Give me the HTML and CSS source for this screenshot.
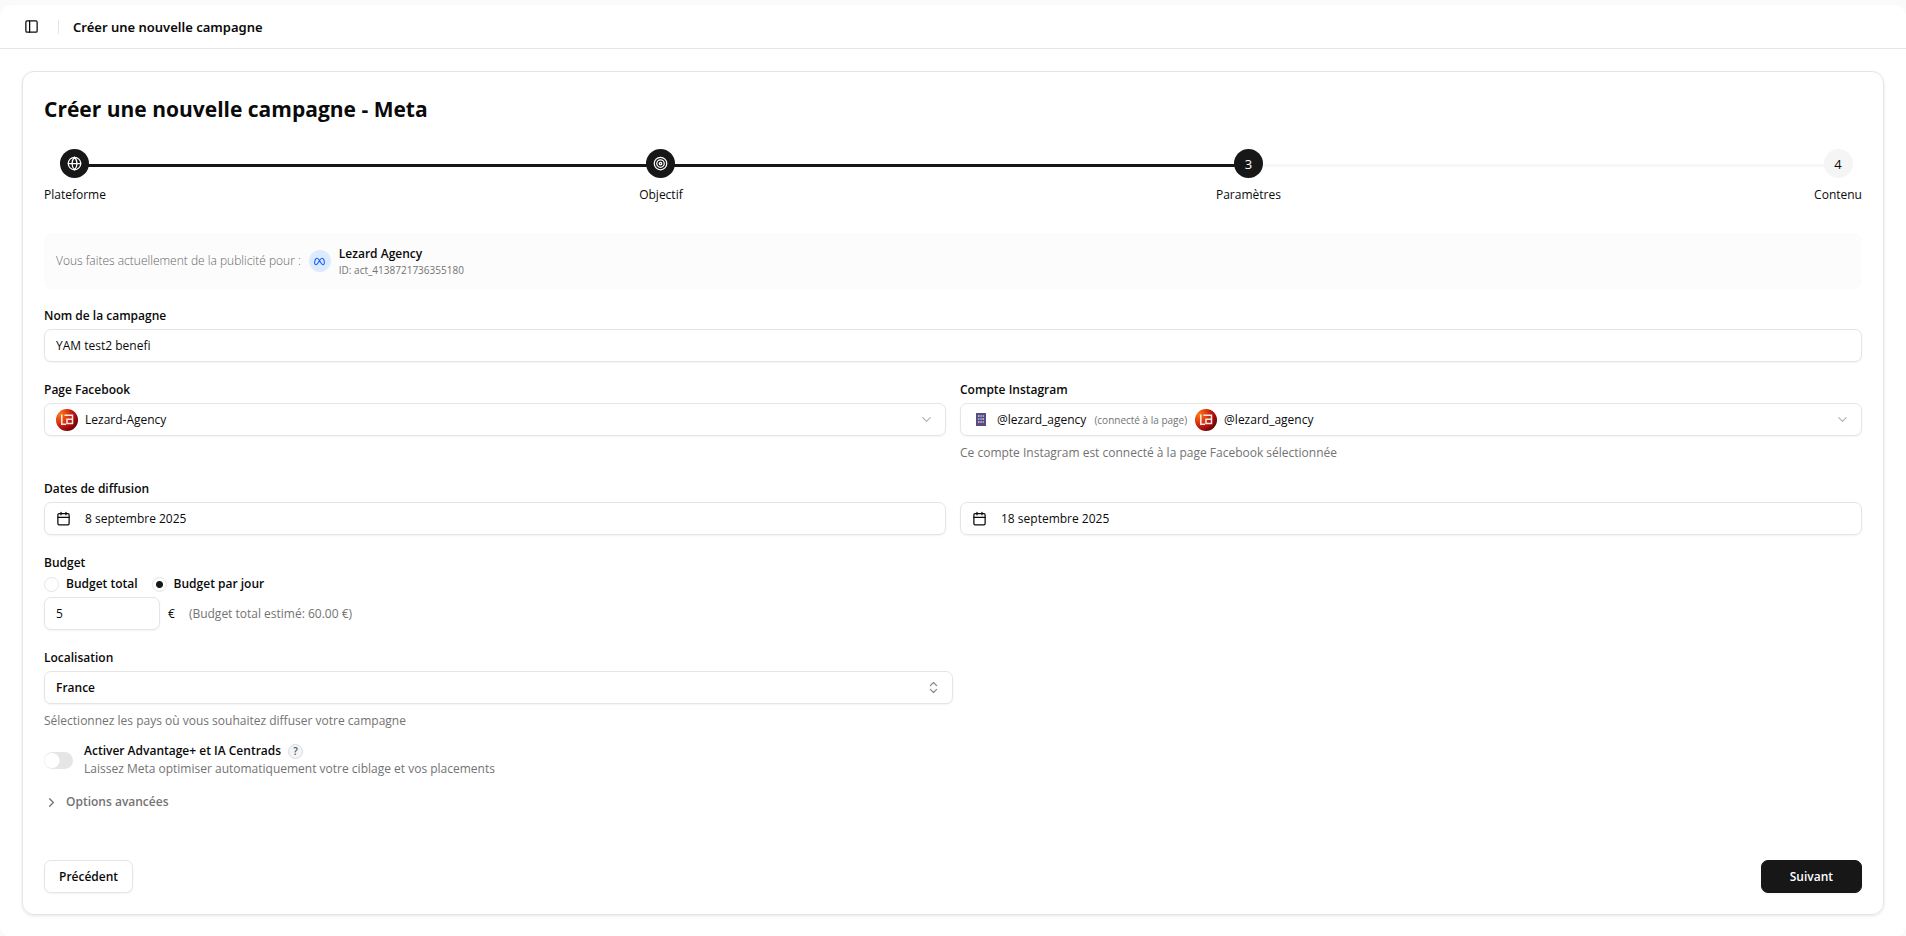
FILE: index.html
```html
<!DOCTYPE html>
<html lang="fr">
<head>
<meta charset="utf-8">
<title>Créer une nouvelle campagne</title>
<meta name="viewport" content="width=device-width, initial-scale=1">
<link rel="stylesheet" href="styles.css">
</head>
<body>
<svg class="defs" width="0" height="0" aria-hidden="true">
  <defs>
    <radialGradient id="brand-fill" cx="20%" cy="25%" r="90%">
      <stop offset="0" stop-color="#f97a12"/>
      <stop offset="0.4" stop-color="#dd3a10"/>
      <stop offset="0.7" stop-color="#b00d0d"/>
      <stop offset="1" stop-color="#5c0505"/>
    </radialGradient>
    <symbol id="brand" viewBox="0 0 22 22">
      <circle cx="11" cy="11" r="11" fill="url(#brand-fill)"/>
      <path d="M5.800 5.500v9.700h4.200M8.500 6.300h8v8.200h-5.500v-4.300h5.500" fill="none" stroke="#fff" stroke-opacity="0.9" stroke-width="1.500"/>
    </symbol>
    <symbol id="calendar" viewBox="0 0 24 24">
      <path d="M8 2v4M16 2v4M3 10h18"/><rect x="3" y="4" width="18" height="18" rx="2"/>
    </symbol>
    <symbol id="chevron-down" viewBox="0 0 24 24"><path d="m6 9 6 6 6-6"/></symbol>
  </defs>
</svg>
<div class="shell">
  <header class="topbar">
    <button class="icon-button" type="button" aria-label="Menu latéral">
      <svg class="icon" viewBox="0 0 24 24"><rect x="3" y="3" width="18" height="18" rx="2"/><path d="M9 3v18"/></svg>
    </button>
    <span class="divider"></span>
    <span class="crumb">Créer une nouvelle campagne</span>
  </header>

  <main class="content">
    <form class="card">
      <h1 class="title">Créer une nouvelle campagne - Meta</h1>

      <div class="stepper">
        <div class="track"><div class="progress" style="width: 66.5%"></div></div>
        <ol class="steps">
          <li class="step">
            <span class="dot done"><svg class="icon" viewBox="0 0 24 24"><circle cx="12" cy="12" r="10"/><path d="M12 2a14.5 14.5 0 0 0 0 20 14.5 14.5 0 0 0 0-20M2 12h20"/></svg></span>
            <span>Plateforme</span>
          </li>
          <li class="step">
            <span class="dot done"><svg class="icon" viewBox="0 0 24 24"><circle cx="12" cy="12" r="10"/><circle cx="12" cy="12" r="6"/><circle cx="12" cy="12" r="2"/></svg></span>
            <span>Objectif</span>
          </li>
          <li class="step" aria-current="step"><span class="dot done">3</span><span>Paramètres</span></li>
          <li class="step"><span class="dot">4</span><span>Contenu</span></li>
        </ol>
      </div>

      <div class="account">
        <span class="account-intro">Vous faites actuellement de la publicité pour :</span>
        <span class="meta-badge">
          <svg viewBox="0 0 24 24"><path d="M12 10.174c1.766-2.784 3.315-4.174 4.648-4.174 2 0 3.263 2.213 4 5.217.704 2.869.5 6.783-2 6.783-1.114 0-2.648-1.565-4.148-3.652a27.600 27.600 0 0 1-2.500-4.174M12 10.174c-1.766-2.784-3.315-4.174-4.648-4.174-2 0-3.263 2.213-4 5.217-.704 2.869-.5 6.783 2 6.783 1.114 0 2.648-1.565 4.148-3.652 1-1.391 1.833-2.783 2.500-4.174"/></svg>
        </span>
        <div class="account-text">
          <span class="account-name">Lezard Agency</span>
          <span class="account-id">ID: act_4138721736355180</span>
        </div>
      </div>

      <div class="field">
        <label class="label" for="name">Nom de la campagne</label>
        <input class="control" id="name" type="text" value="YAM test2 benefi">
      </div>

      <div class="columns">
        <div class="field">
          <label class="label" for="page">Page Facebook</label>
          <div class="control">
            <svg class="brand"><use href="#brand"/></svg>
            <select class="select" id="page"><option>Lezard-Agency</option></select>
            <svg class="icon faint"><use href="#chevron-down"/></svg>
          </div>
        </div>
        <div class="field">
          <label class="label" for="insta">Compte Instagram</label>
          <div class="control">
            <span class="building">
              <svg viewBox="0 0 10 13"><path d="M0 0h10v13H0z" fill="#5b4a86"/><path d="M2 2h1.500v2H2zM6.500 5h1.500v2H6.500zM2 8h1.500v2H2z" fill="#e8a86c"/><path d="M4.300 2h1.500v2H4.300zM6.500 2h1.500v2H6.500zM2 5h1.500v2H2zM4.300 5h1.500v2H4.300zM6.500 8h1.500v2H6.500z" fill="#6db2e8"/><path d="M4.300 8h1.500v2H4.300z" fill="#b7a6c8"/></svg>
            </span>
            <span>@lezard_agency</span>
            <span class="note">(connecté à la page)</span>
            <svg class="brand"><use href="#brand"/></svg>
            <select class="select" id="insta"><option>@lezard_agency</option></select>
            <svg class="icon faint"><use href="#chevron-down"/></svg>
          </div>
          <p class="help">Ce compte Instagram est connecté à la page Facebook sélectionnée</p>
        </div>
      </div>

      <div class="field">
        <span class="label" id="dates">Dates de diffusion</span>
        <div class="columns" role="group" aria-labelledby="dates">
          <button class="control date" type="button"><svg class="icon"><use href="#calendar"/></svg>8 septembre 2025</button>
          <button class="control date" type="button"><svg class="icon"><use href="#calendar"/></svg>18 septembre 2025</button>
        </div>
      </div>

      <div class="field">
        <span class="label tight" id="budget">Budget</span>
        <div class="radios" role="radiogroup" aria-labelledby="budget">
          <label class="radio-label"><input class="radio" type="radio" name="budget">Budget total</label>
          <label class="radio-label"><input class="radio" type="radio" name="budget" checked>Budget par jour</label>
        </div>
        <div class="amount">
          <input class="control amount-input" type="text" inputmode="numeric" value="5" aria-label="Montant du budget">
          <span>€</span>
          <span class="estimate">(Budget total estimé: 60.00 €)</span>
        </div>
      </div>

      <div class="field half">
        <label class="label" for="place">Localisation</label>
        <button class="control place" id="place" type="button" role="combobox" aria-expanded="false">
          <span>France</span>
          <svg class="icon mid" viewBox="0 0 24 24"><path d="m7 15 5 5 5-5M7 9l5-5 5 5"/></svg>
        </button>
        <p class="help">Sélectionnez les pays où vous souhaitez diffuser votre campagne</p>
      </div>

      <div class="toggle-row">
        <input class="switch" id="advantage" type="checkbox" role="switch">
        <div>
          <div class="toggle-head">
            <label for="advantage">Activer Advantage+ et IA Centrads</label>
            <button class="hint" type="button">?</button>
          </div>
          <p class="toggle-text">Laissez Meta optimiser automatiquement votre ciblage et vos placements</p>
        </div>
      </div>

      <button class="advanced" type="button">
        <svg class="icon" viewBox="0 0 24 24"><path d="m9 18 6-6-6-6"/></svg>
        Options avancées
      </button>

      <div class="actions">
        <button class="button" type="button">Précédent</button>
        <button class="button primary" type="submit">Suivant</button>
      </div>
    </form>
  </main>
</div>
</body>
</html>
```

FILE: styles.css
```css
* { box-sizing: border-box; }

body {
  margin: 0;
  padding-top: 5px;
  min-height: 100vh;
  display: flex;
  background: #fafafa;
  color: #0a0a0a;
  font: 12px/18px "Open Sans", "Noto Sans", sans-serif;
}

button, input, select { font: inherit; color: inherit; }
p, h1, ol { margin: 0; padding: 0; }

.defs { position: absolute; }

.shell {
  flex: 1;
  background: #fff;
  border-radius: 12px;
}

.topbar {
  display: flex;
  align-items: center;
  height: 44px;
  padding: 0 22px;
  border-bottom: 1px solid #e5e5e5;
}

.icon {
  flex: none;
  width: 15px;
  height: 15px;
  fill: none;
  stroke: currentColor;
  stroke-width: 2;
  stroke-linecap: round;
  stroke-linejoin: round;
}

.icon-button {
  display: flex;
  padding: 2px;
  border: 0;
  background: none;
}

.divider {
  width: 1px;
  height: 14px;
  margin: 0 14px 0 17px;
  background: #e5e5e5;
}

.crumb {
  font-family: "Noto Sans", "Open Sans", sans-serif;
  font-size: 13px;
  font-weight: 600;
}

.content { padding: 22px; }

.card {
  display: flex;
  flex-direction: column;
  padding: 21px;
  border: 1px solid #e5e5e5;
  border-radius: 12px;
  box-shadow: 0 1px 3px rgba(0, 0, 0, 0.1);
}

.title {
  font-size: 21px;
  line-height: 32px;
  font-weight: 700;
}

.stepper {
  position: relative;
  margin-top: 24px;
}

.track {
  position: absolute;
  top: 15px;
  left: 30px;
  right: 24px;
  height: 3px;
  background: #f7f7f7;
}

.progress { height: 100%; background: #171717; }

.steps {
  position: relative;
  display: flex;
  justify-content: space-between;
  list-style: none;
}

.step {
  display: flex;
  flex-direction: column;
  align-items: center;
  gap: 8px;
}

.dot {
  display: grid;
  place-items: center;
  width: 29px;
  height: 29px;
  border-radius: 50%;
  background: #f5f5f5;
  font-size: 13px;
}

.dot.done { background: #171717; color: #fff; }

.account {
  display: flex;
  align-items: center;
  gap: 8px;
  margin: 29px 0 18px;
  padding: 12px;
  border-radius: 8px;
  background: #fcfcfc;
}

.account-intro { color: #666; font-weight: 300; }

.meta-badge {
  display: grid;
  place-items: center;
  width: 22px;
  height: 22px;
  border-radius: 50%;
  background: #dbeafe;
}

.meta-badge svg {
  width: 13px;
  height: 13px;
  fill: none;
  stroke: #155dfc;
  stroke-width: 2;
}

.account-text { display: flex; flex-direction: column; }
.account-name { font-weight: 600; }
.account-id { color: #737373; font-size: 10px; line-height: 14px; }

.field { display: flex; flex-direction: column; }
.label { margin-bottom: 4px; font-weight: 600; }
.label.tight { margin-bottom: 3px; }

.control {
  display: flex;
  align-items: center;
  width: 100%;
  height: 33px;
  padding: 0 11px;
  border: 1px solid #e5e5e5;
  border-radius: 7px;
  background: #fff;
  box-shadow: 0 1px 2px rgba(0, 0, 0, 0.05);
  text-align: left;
}

.columns {
  display: grid;
  grid-template-columns: 1fr 1fr;
  gap: 14px;
}

.card > .field + .columns,
.card > .field + .field { margin-top: 19px; }

.card > .columns + .field { margin-top: 18px; }

.brand { flex: none; width: 22px; height: 22px; margin-right: 7px; }

.select {
  flex: 1;
  min-width: 0;
  padding: 0;
  border: 0;
  background: none;
  appearance: none;
}

.faint { color: #b5b5b5; }
.mid { color: #8a8a8a; }

.building { display: grid; place-items: center; width: 18px; margin-right: 7px; }
.building svg { width: 10px; height: 13px; }
.note { margin: 0 8px; color: #737373; font-size: 10px; }

.help { margin-top: 8px; color: #737373; }

.date { gap: 14px; }

.radios { display: flex; gap: 14px; }

.radio-label {
  display: flex;
  align-items: center;
  gap: 7px;
  font-weight: 600;
}

.radio {
  width: 15px;
  height: 15px;
  margin: 0;
  border: 1px solid #e5e5e5;
  border-radius: 50%;
  background: #fff;
  appearance: none;
}

.radio:checked { background: radial-gradient(circle, #171717 3px, #fff 4px); }

.amount { display: flex; align-items: center; gap: 8px; margin-top: 4px; }
.amount-input { width: 116px; }
.estimate { margin-left: 6px; color: #737373; }

.half { width: 50%; }
.place { justify-content: space-between; font-weight: 600; }

.toggle-row {
  display: flex;
  align-items: center;
  gap: 11px;
  margin-top: 12px;
}

.switch {
  width: 29px;
  height: 17px;
  margin: 0;
  border-radius: 9px;
  background: radial-gradient(circle at 8px, #fff 7px, #e5e5e5 8px);
  appearance: none;
}

.toggle-head {
  display: flex;
  align-items: center;
  gap: 7px;
  font-weight: 600;
}

.hint {
  width: 15px;
  height: 15px;
  padding: 0;
  border: 1px solid #d9dce0;
  border-radius: 50%;
  background: #f3f4f6;
  color: #4a5565;
  font-size: 10px;
  line-height: 13px;
}

.toggle-text { color: #737373; }

.advanced {
  display: flex;
  align-items: center;
  align-self: flex-start;
  gap: 7px;
  margin-top: 15px;
  padding: 0;
  border: 0;
  background: none;
  color: #737373;
  font-weight: 600;
}

.actions {
  display: flex;
  justify-content: space-between;
  margin-top: 49px;
}

.button {
  height: 33px;
  padding: 0 14px;
  border: 1px solid #e5e5e5;
  border-radius: 7px;
  background: #fff;
  box-shadow: 0 1px 2px rgba(0, 0, 0, 0.05);
  font-weight: 600;
}

.primary {
  padding: 0 28px;
  border-color: #171717;
  background: #171717;
  color: #fff;
}
```
